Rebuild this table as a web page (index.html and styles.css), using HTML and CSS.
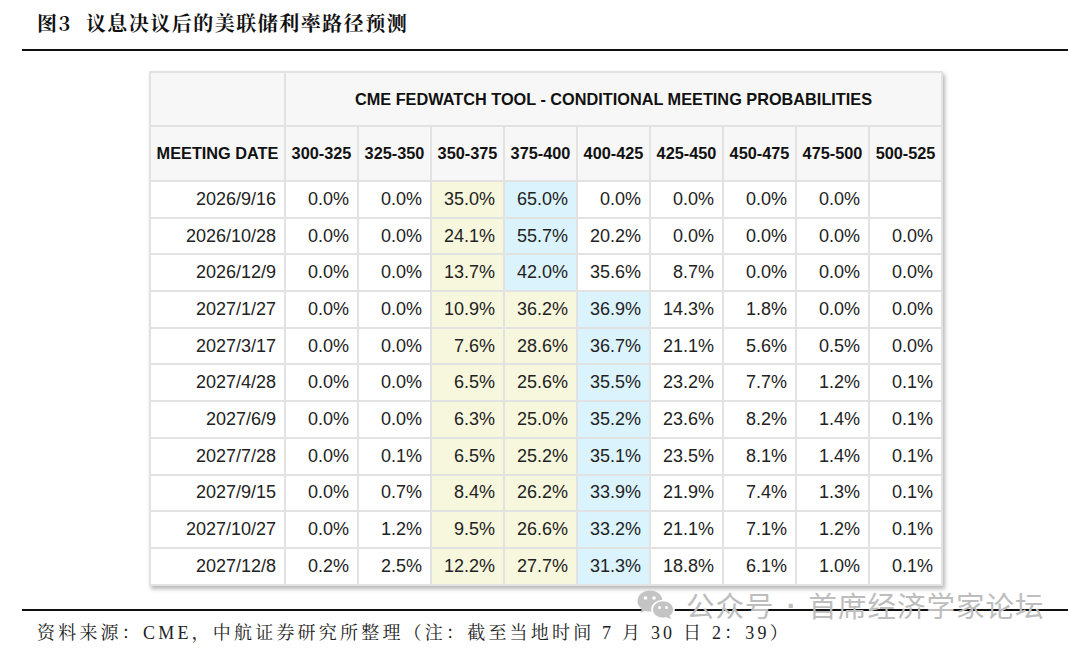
FILE: index.html
```html
<!DOCTYPE html>
<html lang="zh">
<head>
<meta charset="utf-8">
<link rel="stylesheet" href="styles.css">
</head>
<body>
<div class="page">
  <div class="title"><span class="fig">图3</span><span class="title-text">议息决议后的美联储利率路径预测</span></div>
  <div class="table-wrap">
    <table class="fw">
      <colgroup><col class="c-date"><col><col><col><col><col><col><col><col><col></colgroup>
      <tr class="h1"><th></th><th colspan="9">CME FEDWATCH TOOL - CONDITIONAL MEETING PROBABILITIES</th></tr>
      <tr class="h2"><th>MEETING DATE</th><th>300-325</th><th>325-350</th><th>350-375</th><th>375-400</th><th>400-425</th><th>425-450</th><th>450-475</th><th>475-500</th><th>500-525</th></tr>
      <tr><td>2026/9/16</td><td>0.0%</td><td>0.0%</td><td class="y">35.0%</td><td class="b">65.0%</td><td>0.0%</td><td>0.0%</td><td>0.0%</td><td>0.0%</td><td></td></tr>
      <tr><td>2026/10/28</td><td>0.0%</td><td>0.0%</td><td class="y">24.1%</td><td class="b">55.7%</td><td>20.2%</td><td>0.0%</td><td>0.0%</td><td>0.0%</td><td>0.0%</td></tr>
      <tr><td>2026/12/9</td><td>0.0%</td><td>0.0%</td><td class="y">13.7%</td><td class="b">42.0%</td><td>35.6%</td><td>8.7%</td><td>0.0%</td><td>0.0%</td><td>0.0%</td></tr>
      <tr><td>2027/1/27</td><td>0.0%</td><td>0.0%</td><td class="y">10.9%</td><td class="y">36.2%</td><td class="b">36.9%</td><td>14.3%</td><td>1.8%</td><td>0.0%</td><td>0.0%</td></tr>
      <tr><td>2027/3/17</td><td>0.0%</td><td>0.0%</td><td class="y">7.6%</td><td class="y">28.6%</td><td class="b">36.7%</td><td>21.1%</td><td>5.6%</td><td>0.5%</td><td>0.0%</td></tr>
      <tr><td>2027/4/28</td><td>0.0%</td><td>0.0%</td><td class="y">6.5%</td><td class="y">25.6%</td><td class="b">35.5%</td><td>23.2%</td><td>7.7%</td><td>1.2%</td><td>0.1%</td></tr>
      <tr><td>2027/6/9</td><td>0.0%</td><td>0.0%</td><td class="y">6.3%</td><td class="y">25.0%</td><td class="b">35.2%</td><td>23.6%</td><td>8.2%</td><td>1.4%</td><td>0.1%</td></tr>
      <tr><td>2027/7/28</td><td>0.0%</td><td>0.1%</td><td class="y">6.5%</td><td class="y">25.2%</td><td class="b">35.1%</td><td>23.5%</td><td>8.1%</td><td>1.4%</td><td>0.1%</td></tr>
      <tr><td>2027/9/15</td><td>0.0%</td><td>0.7%</td><td class="y">8.4%</td><td class="y">26.2%</td><td class="b">33.9%</td><td>21.9%</td><td>7.4%</td><td>1.3%</td><td>0.1%</td></tr>
      <tr><td>2027/10/27</td><td>0.0%</td><td>1.2%</td><td class="y">9.5%</td><td class="y">26.6%</td><td class="b">33.2%</td><td>21.1%</td><td>7.1%</td><td>1.2%</td><td>0.1%</td></tr>
      <tr><td>2027/12/8</td><td>0.2%</td><td>2.5%</td><td class="y">12.2%</td><td class="y">27.7%</td><td class="b">31.3%</td><td>18.8%</td><td>6.1%</td><td>1.0%</td><td>0.1%</td></tr>
    </table>
  </div>
  <div class="source">资料来源：CME，中航证券研究所整理（注：截至当地时间 7 月 30 日 2：39）</div>
  <div class="watermark">
    <svg class="wx" width="38" height="30" viewBox="0 0 38 30">
      <ellipse cx="13" cy="11" rx="12.5" ry="10.5" fill="#c4c4c4"/>
      <path d="M5 18 L3.5 23 L9.5 20 Z" fill="#c4c4c4"/>
      <circle cx="8.5" cy="8" r="1.8" fill="#fff"/>
      <circle cx="17" cy="8" r="1.8" fill="#fff"/>
      <ellipse cx="26" cy="19.5" rx="11" ry="9" fill="#c4c4c4" stroke="#fff" stroke-width="1.6"/>
      <path d="M32 25 L34.5 29 L28.5 27 Z" fill="#c4c4c4"/>
      <circle cx="22.5" cy="17.5" r="1.5" fill="#fff"/>
      <circle cx="29.5" cy="17.5" r="1.5" fill="#fff"/>
    </svg>
    <span class="wm-a">公众号</span><span class="wm-dot">·</span><span class="wm-b">首席经济学家论坛</span>
  </div>
</div>
</body>
</html>
```

FILE: styles.css
```css
* { box-sizing: border-box; }
html, body { margin: 0; padding: 0; background: #fff; }
.page {
  position: relative;
  width: 1080px;
  height: 649px;
  padding: 0 12px 0 22px;
}
.title {
  height: 51px;
  border-bottom: 2px solid #111;
  padding: 11px 0 0 15px;
  font-family: "Noto Serif CJK SC", "Noto Sans CJK SC", sans-serif;
  font-weight: 700;
  font-size: 20px;
  line-height: 24px;
  color: #111;
  letter-spacing: 1.5px;
}
.fig { margin-right: 14px; }
.table-wrap {
  padding: 20px 0 0 127px;
  height: 558px;
}
.fw {
  border-collapse: collapse;
  width: 792px;
  table-layout: fixed;
  font-family: "Liberation Sans", Arial, sans-serif;
  box-shadow: 2px 3px 4px rgba(0,0,0,0.28);
  background: #fff;
}
.fw col { width: 73px; }
.fw col.c-date { width: 135px; }
.fw th, .fw td {
  border: 2px solid #e2e2e2;
  padding: 0 8px 0 0;
}
.fw th {
  background: #f7f7f7;
  font-size: 16.3px;
  font-weight: 700;
  color: #111;
  text-align: center;
  padding: 0;
  white-space: nowrap;
}
.fw .h1 th { height: 54px; }
.fw .h2 th { height: 55px; }
.fw td {
  height: 36.7px;
  font-size: 18px;
  color: #222;
  text-align: right;
}
.fw td.y { background: #f7f7dd; }
.fw td.b { background: #dbf3fd; }
.source {
  border-top: 2px solid #111;
  padding: 9px 0 0 15px;
  font-family: "Liberation Serif", "Noto Serif CJK SC", "Noto Sans CJK SC", serif;
  font-size: 18px;
  line-height: 26px;
  letter-spacing: 3.2px;
  color: #222;
}
.watermark {
  position: absolute;
  left: 637px;
  top: 588px;
  display: flex;
  align-items: center;
  color: #bdbdbd;
  font-family: "Noto Sans CJK SC", sans-serif;
  font-size: 28.5px;
  line-height: 34px;
  white-space: nowrap;
}
.wx { margin-right: 11px; }
.wm-a { letter-spacing: 1px; }
.wm-dot {
  width: 34px;
  text-align: center;
  font-family: "Liberation Sans", sans-serif;
  font-weight: 700;
}
.wm-b { letter-spacing: 1px; }
```
